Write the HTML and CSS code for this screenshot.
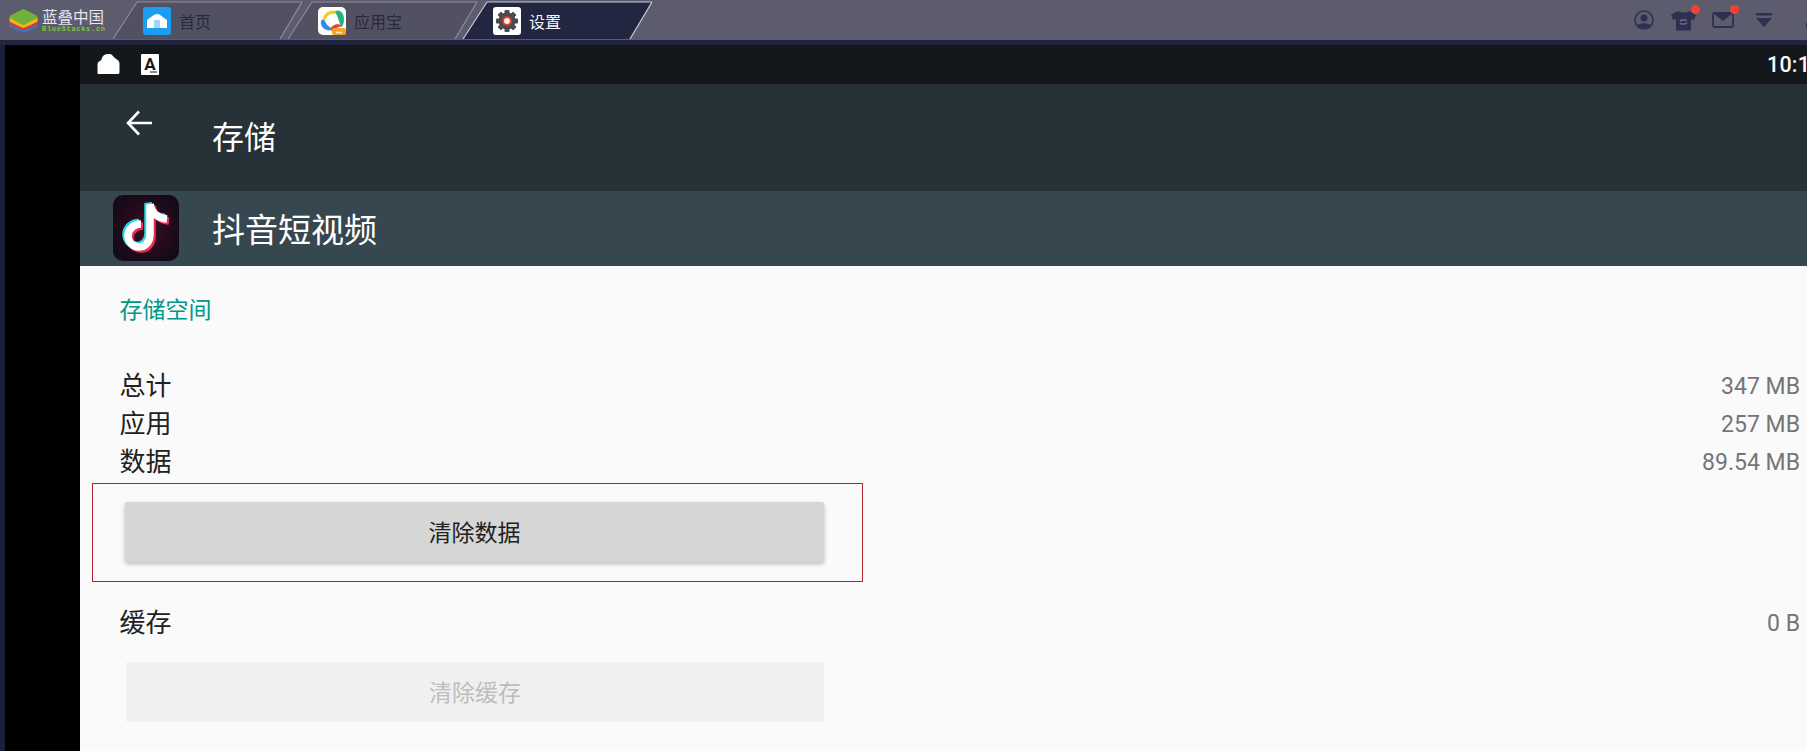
FILE: index.html
```html
<!DOCTYPE html>
<html lang="zh-CN">
<head>
<meta charset="utf-8">
<title>存储</title>
<link rel="stylesheet" href="styles.css">
</head>
<body>
<header class="titlebar">
  <div class="brand">
    <svg class="brand-logo" viewBox="0 0 29 24" width="29" height="24">
      <path d="M.500 13.500v3.500c0 .5 0 .8 1 1.300L13 23.500c1 .5 2 .5 3 0l11.500-5.200c1-.5 1-.8 1-1.300v-3.500z" fill="#2f7cc0"/>
      <path d="M.500 11v3.500c0 .5 0 .8 1 1.300L13 21c1 .5 2 .5 3 0l11.500-5.200c1-.5 1-.8 1-1.300V11z" fill="#d9372f"/>
      <path d="M.500 8.500V12c0 .5 0 .8 1 1.300L13 18.500c1 .5 2 .5 3 0l11.500-5.200c1-.5 1-.8 1-1.300V8.500z" fill="#f0b322"/>
      <path d="M13 .500c1-.5 2-.5 3 0l11.500 6c1.300.7 1.300 2 0 2.700L16 15.500c-1 .5-2 .5-3 0L1.500 9.200c-1.300-.7-1.300-2 0-2.700z" fill="#6fb13a"/>
    </svg>
    <div class="brand-text">
      <span class="brand-cn">蓝叠中国</span>
      <span class="brand-en">BlueStacks.cn</span>
    </div>
  </div>
  <nav class="tabs">
    <div class="tab">
      <svg class="tab-shape" viewBox="0 0 189 39" width="189" height="39">
        <polygon points="0,39 24,2 189,2 167,39" fill="#525162"/>
        <polyline points="0,39 24,2 189,2 167,39" fill="none" stroke="#8c8b9c" stroke-width="1.200"/>
      </svg>
      <svg class="tab-icon" viewBox="0 0 28 28" width="28" height="28">
        <rect width="28" height="28" rx="3" fill="#1c9df3"/>
        <path d="M4 13C8 10.500 11 7 14 7C17 7 20 10.500 24 13V21H4z" fill="#fff"/>
        <rect x="11" y="13" width="6" height="8" fill="#9fd5f7"/>
      </svg>
      <span class="tab-label">首页</span>
    </div>
    <div class="tab">
      <svg class="tab-shape" viewBox="0 0 189 39" width="189" height="39">
        <polygon points="0,39 24,2 189,2 167,39" fill="#525162"/>
        <polyline points="0,39 24,2 189,2 167,39" fill="none" stroke="#8c8b9c" stroke-width="1.200"/>
      </svg>
      <svg class="tab-icon" viewBox="0 0 28 28" width="28" height="28">
        <rect width="28" height="28" rx="5" fill="#fff"/>
        <path d="M5 12C6 6 11 2 19 4C19 6 17 7 15 7C11 7 9 9 8 12C7 13 5.500 13 5 12z" fill="#f6cc1c"/>
        <path d="M17 5C21 1 26 6 26 12C26 16 25 19 23 20C21 15 20 9 17 5z" fill="#22b67e"/>
        <path d="M3 14C4 12 6 12 7 14C8 17 10 19 13 21C13 23 11 24 9 23C5 22 2 18 3 14z" fill="#2e8fe6"/>
        <path d="M12 23C13 18 20 15 24 19C21 20 17 21 14 24z" fill="#e63f39"/>
        <rect x="14" y="21" width="14" height="7" rx="2" fill="#f4a62a"/>
        <path d="M18 25.500h6" stroke="#fff2d0" stroke-width="1.500"/>
      </svg>
      <span class="tab-label">应用宝</span>
    </div>
    <div class="tab tab-active">
      <svg class="tab-shape" viewBox="0 0 189 39" width="189" height="39">
        <polygon points="0,39 24,2 189,2 167,39" fill="#232640"/>
        <polyline points="0,39 24,2 189,2 167,39" fill="none" stroke="#c9c9d6" stroke-width="1.200"/>
      </svg>
      <svg class="tab-icon" viewBox="0 0 28 28" width="28" height="28">
        <rect width="28" height="28" rx="3" fill="#fff"/>
        <g fill="#4b4a4c">
          <circle cx="14" cy="14" r="8.500"/>
          <rect x="11.500" y="3" width="5" height="22" rx="1"/>
          <rect x="11.500" y="3" width="5" height="22" rx="1" transform="rotate(45 14 14)"/>
          <rect x="11.500" y="3" width="5" height="22" rx="1" transform="rotate(90 14 14)"/>
          <rect x="11.500" y="3" width="5" height="22" rx="1" transform="rotate(135 14 14)"/>
        </g>
        <circle cx="14" cy="14" r="5" fill="#c9432f"/>
        <circle cx="14" cy="14" r="3" fill="#fbeae6"/>
      </svg>
      <span class="tab-label">设置</span>
    </div>
  </nav>
  <div class="tools">
    <svg class="tool-person" viewBox="0 0 20 20" width="20" height="20">
      <circle cx="10" cy="10" r="9" fill="none" stroke="#2d3050" stroke-width="1.600"/>
      <circle cx="10" cy="8" r="3.500" fill="#2d3050"/>
      <path d="M3.500 15.500C5 12.500 15 12.500 16.500 15.500C14 19 6 19 3.500 15.500z" fill="#2d3050"/>
    </svg>
    <span class="tool-badged">
      <svg viewBox="0 0 25 21" width="25" height="21">
        <path d="M7 1L0 5l2 5 3-1v11.500h15V9l3 1 2-5-7-4c-1 2-9 2-11 0z" fill="#2d3050"/>
        <path d="M9 11.500c1-2 5-2 7-1M16 12.500c-1 2-5 2-7 1" stroke="#7a7a90" stroke-width="1.200" fill="none"/>
      </svg>
      <i class="dot dot-shirt"></i>
    </span>
    <span class="tool-badged">
      <svg viewBox="0 0 22 16" width="22" height="16">
        <rect x="1" y="1" width="20" height="14" rx="1.500" fill="none" stroke="#2d3050" stroke-width="1.800"/>
        <path d="M1.500 1.500h19L11 9z" fill="#2d3050"/>
      </svg>
      <i class="dot dot-mail"></i>
    </span>
    <svg class="tool-drop" viewBox="0 0 16 14" width="16" height="14">
      <rect width="16" height="2.500" fill="#2d3050"/>
      <path d="M0 5h16L8 14z" fill="#2d3050"/>
    </svg>
    <i class="tool-edge"></i>
  </div>
</header>
<div class="strip"></div>
<main class="desktop">
  <div class="gutter"></div>
  <div class="letterbox"></div>
  <section class="screen">
    <div class="statusbar">
      <svg class="status-sd" viewBox="0 0 22 19" width="23" height="20" preserveAspectRatio="none">
        <path d="M1.500 19C.500 19 .500 18 .500 17V10C.500 8 2 7 4 6C5 2 7 0 10 0H13C15 1 16 3 18 4.500C20 5.500 21.500 7 21.500 9V17C21.500 18 21 19 20 19z" fill="#fff"/>
      </svg>
      <span class="status-a">A</span>
      <span class="clock">10:1</span>
    </div>
    <div class="toolbar">
      <svg class="back" viewBox="0 0 27 26" width="27" height="26">
        <path d="M26 13H2M13 1.500L2 13l11 11.500" fill="none" stroke="#fff" stroke-width="2.600"/>
      </svg>
      <h1 class="toolbar-title">存储</h1>
    </div>
    <div class="approw">
      <svg class="app-icon" viewBox="0 0 66 66" width="66" height="66">
        <defs>
          <radialGradient id="tk-glow" cx="50%" cy="50%" r="55%">
            <stop offset="0" stop-color="#3f0a22"/>
            <stop offset="1" stop-color="#150b18"/>
          </radialGradient>
        </defs>
        <rect width="66" height="66" rx="10" fill="url(#tk-glow)"/>
        <g fill="none" stroke-width="7.500">
          <path d="M37 10V40C37 47 32 52 26 52C20 52 15 47 15 41C15 34 21 29 28 29M37 9C38 17 44 23 54 24" stroke="#25d8e4" transform="translate(-2 -1.500)"/>
          <path d="M37 10V40C37 47 32 52 26 52C20 52 15 47 15 41C15 34 21 29 28 29M37 9C38 17 44 23 54 24" stroke="#f02a55" transform="translate(2 2)"/>
          <path d="M37 10V40C37 47 32 52 26 52C20 52 15 47 15 41C15 34 21 29 28 29M37 9C38 17 44 23 54 24" stroke="#fff"/>
        </g>
      </svg>
      <span class="app-name">抖音短视频</span>
    </div>
    <div class="content">
      <h2 class="section-title">存储空间</h2>
      <div class="stat"><span class="stat-label">总计</span><span class="stat-value">347 MB</span></div>
      <div class="stat"><span class="stat-label">应用</span><span class="stat-value">257 MB</span></div>
      <div class="stat"><span class="stat-label">数据</span><span class="stat-value">89.54 MB</span></div>
      <div class="highlight">
        <div class="btn btn-raised">清除数据</div>
      </div>
      <div class="stat stat-cache"><span class="stat-label">缓存</span><span class="stat-value">0 B</span></div>
      <div class="btn btn-disabled">清除缓存</div>
    </div>
  </section>
</main>
</body>
</html>
```

FILE: styles.css
```css
* { box-sizing: border-box; }
html, body { margin: 0; height: 100%; }
body {
  width: 1807px;
  height: 751px;
  overflow: hidden;
  display: flex;
  flex-direction: column;
  background: #000;
  font-family: "Noto Sans CJK SC", "Noto Sans", sans-serif;
}
.titlebar {
  flex: none;
  height: 40px;
  display: flex;
  background: #5d5c6e;
}
.brand {
  flex: none;
  width: 113px;
  padding-left: 9px;
  display: flex;
  align-items: center;
  gap: 4px;
}
.brand-logo { flex: none; margin-top: 2px; }
.brand-text { display: flex; flex-direction: column; margin-top: 1px; }
.brand-cn { font-size: 15.500px; line-height: 17px; color: #e6e6ee; white-space: nowrap; }
.brand-en {
  font: 700 7px/8px "Liberation Mono", monospace;
  letter-spacing: .7px;
  color: #7cc63c;
  white-space: nowrap;
}
.tabs { display: flex; }
.tab {
  position: relative;
  width: 189px;
  height: 39px;
  margin-right: -14px;
  padding-left: 30px;
  display: flex;
  align-items: center;
  gap: 8px;
}
.tab-shape { position: absolute; left: 0; top: 0; }
.tab-icon { position: relative; flex: none; margin-top: 3px; }
.tab-label { position: relative; font-size: 16px; line-height: 20px; color: #292a3c; margin-top: 3px; }
.tab-active .tab-label { color: #f4f4f8; }
.tools {
  margin-left: auto;
  display: flex;
  align-items: center;
}
.tool-person { margin-right: 17px; }
.tool-badged { position: relative; display: flex; margin-right: 16px; }
.tool-badged:nth-child(3) { margin-right: 22px; }
.tool-drop { margin-right: 34px; }
.tool-edge { width: 1px; height: 5px; background: #2d3050; margin-top: 11px; }
.dot {
  position: absolute;
  width: 9px;
  height: 9px;
  border-radius: 50%;
  background: #f2432f;
}
.dot-shirt { right: -4px; top: -5px; }
.dot-mail { right: -5px; top: -7px; }
.strip { flex: none; height: 5px; background: #232440; }
.desktop { flex: 1; min-height: 0; display: flex; }
.gutter { flex: none; width: 5px; background: #1c1d38; }
.letterbox { flex: none; width: 75px; background: #000; }
.screen { flex: 1; min-width: 0; display: flex; flex-direction: column; background: #fafafa; }
.statusbar {
  flex: none;
  height: 39px;
  background: #15181b;
  display: flex;
  align-items: center;
  padding-left: 17px;
  overflow: hidden;
  font-family: Roboto, sans-serif;
}
.status-sd { flex: none; margin-top: -1px; }
.status-a {
  position: relative;
  flex: none;
  width: 18px;
  height: 21px;
  margin-left: 21px;
  background: #fff;
  border-radius: 1px;
  color: #15181b;
  font: 700 17px/20px Roboto, sans-serif;
  text-align: center;
}
.status-a::after {
  content: "";
  position: absolute;
  right: 2px;
  bottom: 2px;
  width: 7px;
  height: 2px;
  background: #8a8a8a;
}
.clock {
  margin-left: auto;
  width: 40px;
  font-size: 21.500px;
  font-weight: 500;
  color: #fafafa;
  white-space: nowrap;
  letter-spacing: .2px;
}
.toolbar {
  flex: none;
  height: 107px;
  background: #273238;
  display: flex;
  padding-left: 46px;
}
.back { flex: none; margin-top: 26px; }
.toolbar-title {
  margin: 29px 0 0 59px;
  font-size: 32px;
  font-weight: 400;
  line-height: 44px;
  color: #fff;
}
.approw {
  flex: none;
  height: 75px;
  background: #37474f;
  display: flex;
  align-items: center;
  padding-left: 33px;
  gap: 33px;
}
.app-icon { flex: none; margin-top: -1px; }
.app-name { font-size: 33px; line-height: 44px; color: #fff; margin-top: -2px; }
.content { flex: 1; padding: 26px 7px 0 39.500px; }
.section-title {
  margin: 0 0 42px;
  font-size: 23px;
  font-weight: 400;
  line-height: 32px;
  color: #009688;
}
.stat {
  height: 38px;
  display: flex;
  justify-content: space-between;
  align-items: center;
}
.stat-label { font-size: 26px; color: #212121; line-height: 38px; margin-top: -2px; }
.stat-value { font: 23px/38px Roboto, sans-serif; color: #757575; margin-top: 4px; }
.stat-cache { margin-top: 21px; }
.highlight {
  width: 771px;
  height: 99px;
  margin: 3px 0 0 -27.500px;
  padding: 18px 0 0 32px;
  border: 1px solid #b3232a;
}
.btn {
  width: 699px;
  height: 60px;
  padding-bottom: 2px;
  display: flex;
  align-items: center;
  justify-content: center;
  border-radius: 2px;
  font-size: 23px;
}
.btn-raised {
  background: #d6d6d6;
  color: #212121;
  box-shadow: 0 2px 4px rgba(0, 0, 0, .25);
}
.btn-disabled {
  margin: 21px 0 0 6.500px;
  width: 698px;
  background: #f0f0f0;
  color: #bdbdbd;
}
```
